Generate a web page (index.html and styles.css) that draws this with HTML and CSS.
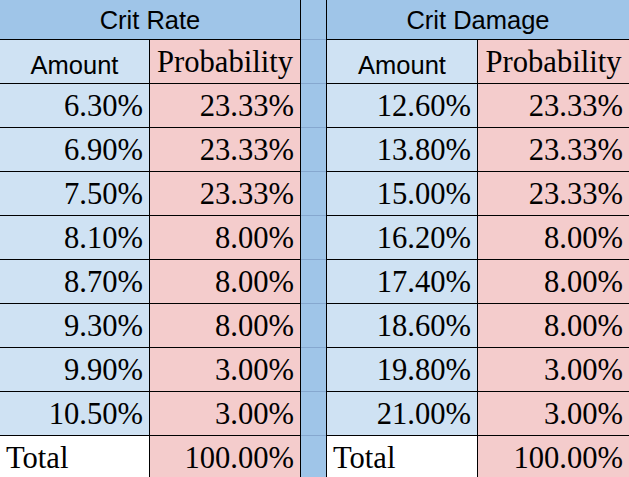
FILE: index.html
```html
<!DOCTYPE html>
<html lang="en">
<head>
<meta charset="utf-8">
<title>Crit Rate / Crit Damage</title>
<link rel="stylesheet" href="styles.css">
</head>
<body>
<div class="sheet">
  <div class="table">
    <div class="cell head">Crit Rate</div>
    <div class="cell sub amount">Amount</div>
    <div class="cell sub prob serif">Probability</div>
    <div class="cell num amount">6.30%</div><div class="cell num prob">23.33%</div>
    <div class="cell num amount">6.90%</div><div class="cell num prob">23.33%</div>
    <div class="cell num amount">7.50%</div><div class="cell num prob">23.33%</div>
    <div class="cell num amount">8.10%</div><div class="cell num prob">8.00%</div>
    <div class="cell num amount">8.70%</div><div class="cell num prob">8.00%</div>
    <div class="cell num amount">9.30%</div><div class="cell num prob">8.00%</div>
    <div class="cell num amount">9.90%</div><div class="cell num prob">3.00%</div>
    <div class="cell num amount">10.50%</div><div class="cell num prob">3.00%</div>
    <div class="cell total">Total</div><div class="cell num prob">100.00%</div>
  </div>
  <div class="spacer">
    <div></div><div></div><div></div><div></div><div></div><div></div><div></div><div></div><div></div><div></div><div></div>
  </div>
  <div class="table wide">
    <div class="cell head">Crit Damage</div>
    <div class="cell sub amount">Amount</div>
    <div class="cell sub prob serif">Probability</div>
    <div class="cell num amount">12.60%</div><div class="cell num prob">23.33%</div>
    <div class="cell num amount">13.80%</div><div class="cell num prob">23.33%</div>
    <div class="cell num amount">15.00%</div><div class="cell num prob">23.33%</div>
    <div class="cell num amount">16.20%</div><div class="cell num prob">8.00%</div>
    <div class="cell num amount">17.40%</div><div class="cell num prob">8.00%</div>
    <div class="cell num amount">18.60%</div><div class="cell num prob">8.00%</div>
    <div class="cell num amount">19.80%</div><div class="cell num prob">3.00%</div>
    <div class="cell num amount">21.00%</div><div class="cell num prob">3.00%</div>
    <div class="cell total">Total</div><div class="cell num prob">100.00%</div>
  </div>
</div>
</body>
</html>
```
FILE: styles.css
```css
html, body {
  margin: 0;
  padding: 0;
  background: #ffffff;
  overflow: hidden;
  height: 477px;
}

.sheet {
  display: flex;
  align-items: flex-start;
  width: 629px;
}

.table {
  display: grid;
  grid-template-columns: 149px 150px;
  grid-template-rows: 39px repeat(10, 43px);
  gap: 1px;
  background: #000000;
  border-right: 1px solid #000000;
}

.table.wide {
  grid-template-columns: 150px 151px;
  border-right: 0;
}

.spacer {
  display: grid;
  grid-template-columns: 25px;
  grid-template-rows: 39px repeat(10, 43px);
  gap: 1px;
  background: #86a8cf;
  border-right: 1px solid #000000;
}

.spacer > div {
  background: #9fc5e8;
}

.cell {
  display: flex;
  align-items: flex-end;
  padding: 0 6px 3px 6px;
  color: #000000;
  font-family: "Liberation Serif", "Times New Roman", serif;
  font-size: 30.6px;
  white-space: nowrap;
  overflow: hidden;
}

.head {
  grid-column: 1 / 3;
  justify-content: center;
  background: #9fc5e8;
  font-family: "Liberation Sans", Arial, sans-serif;
  font-size: 25.5px;
  padding-bottom: 4px;
}

.sub {
  justify-content: center;
  font-family: "Liberation Sans", Arial, sans-serif;
  font-size: 25.5px;
}

.sub.serif {
  font-family: "Liberation Serif", "Times New Roman", serif;
  font-size: 30.6px;
  padding-left: 3px;
  padding-right: 3px;
}

.amount {
  background: #cfe2f3;
}

.prob {
  background: #f4cccc;
}

.num {
  justify-content: flex-end;
}

.total {
  background: #ffffff;
  justify-content: flex-start;
}
```
